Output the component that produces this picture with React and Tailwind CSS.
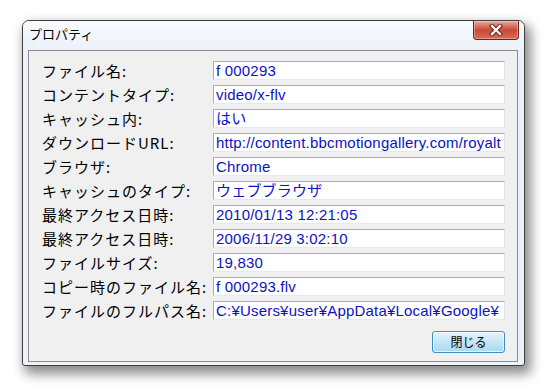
import React from 'react'

const rows = [
  { label: 'ファイル名:', value: 'f 000293' },
  { label: 'コンテントタイプ:', value: 'video/x-flv' },
  { label: 'キャッシュ内:', value: 'はい' },
  { label: 'ダウンロードURL:', value: 'http://content.bbcmotiongallery.com/royalt' },
  { label: 'ブラウザ:', value: 'Chrome' },
  { label: 'キャッシュのタイプ:', value: 'ウェブブラウザ' },
  { label: '最終アクセス日時:', value: '2010/01/13 12:21:05' },
  { label: '最終アクセス日時:', value: '2006/11/29 3:02:10' },
  { label: 'ファイルサイズ:', value: '19,830' },
  { label: 'コピー時のファイル名:', value: 'f 000293.flv' },
  { label: 'ファイルのフルパス名:', value: 'C:¥Users¥user¥AppData¥Local¥Google¥' },
]

function CloseButton() {
  return (
    <div className="w-[46px] h-[19px] rounded-b-[4px] border border-t-0 border-[#6b2219] bg-gradient-to-b from-[#e9a797] via-[#c9493a] to-[#d96b55] flex items-center justify-center shadow-[inset_0_0_0_1px_rgba(255,255,255,0.35)]">
      <svg width="16" height="12" viewBox="0 0 16 12">
        <path d="M4 2 L12 10 M12 2 L4 10" stroke="#5a1a12" strokeWidth="4.2" strokeLinecap="square" />
        <path d="M4 2 L12 10 M12 2 L4 10" stroke="#ffffff" strokeWidth="2.4" strokeLinecap="square" />
      </svg>
    </div>
  )
}

export default function App() {
  return (
    <div className="w-[550px] h-[391px] bg-white pt-[20px] pl-[22px] font-['Noto_Sans_CJK_JP',sans-serif]">
      <div className="w-[503px] h-[346px] rounded-t-[7px] rounded-b-[3px] border border-[#3e3e3e] bg-[#eef3f9] shadow-[4px_6px_12px_2px_rgba(0,0,0,0.45)] flex flex-col">
        <div className="h-[29px] flex justify-between rounded-t-[6px] bg-gradient-to-b from-[#f8fbfe] to-[#ecf2f9]">
          <div className="pl-[6px] pt-[4px] text-[13px] leading-[18px] text-black">プロパティ</div>
          <div className="pr-[5px]">
            <CloseButton />
          </div>
        </div>
        <div className="flex-1 pl-[5px] pr-[6px] pb-[3px]">
          <div className="h-full border border-[#8c8c8c] bg-[#f0f0f0] pt-[10px] pl-[13px] pr-[12px] flex flex-col">
            <div className="flex flex-col gap-[5px]">
              {rows.map((r, i) => (
                <div key={i} className="flex items-center h-[19px]">
                  <div className="w-[171px] text-[15px] leading-[19px] tracking-[1px] text-black whitespace-nowrap">{r.label}</div>
                  <div className="w-[292px] h-[19px] border border-t-[#abadb3] border-l-[#abadb3] border-r-[#dfe3ea] border-b-[#e3e9ef] bg-white pl-[2px] overflow-hidden whitespace-nowrap text-[15px] leading-[17px] tracking-[0.2px] text-[#0b12c9] font-['Liberation_Sans','Noto_Sans_CJK_JP',sans-serif]">
                    {r.value}
                  </div>
                </div>
              ))}
            </div>
            <div className="flex justify-end mt-[11px]">
              <button className="w-[73px] h-[22px] rounded-[3px] border border-[#3c8fc4] bg-gradient-to-b from-[#e5f4fc] via-[#c4e5f6] to-[#a7d9f5] shadow-[inset_0_0_0_1px_rgba(255,255,255,0.7)] text-[12px] leading-[18px] text-black">
                閉じる
              </button>
            </div>
          </div>
        </div>
      </div>
    </div>
  )
}
